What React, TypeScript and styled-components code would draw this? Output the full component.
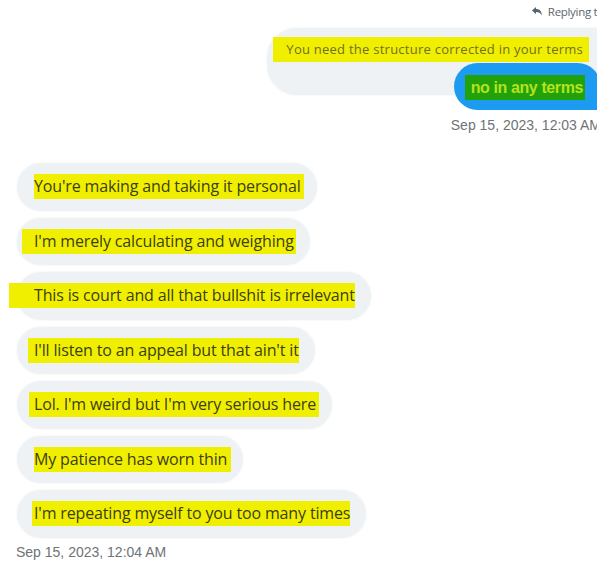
import * as React from 'react';
import styled, { createGlobalStyle } from 'styled-components';

const GlobalStyle = createGlobalStyle`
  body {
    margin: 0;
    background: #ffffff;
    overflow: hidden;
  }
`;

const Page = styled.div`
  width: 597px;
  height: 567px;
  overflow: hidden;
  display: flex;
  flex-direction: column;
  font-family: 'Open Sans', 'Noto Sans', sans-serif;
`;

const SentGroup = styled.div`
  align-self: flex-end;
  margin-right: -4px;
  display: flex;
  flex-direction: column;
  align-items: flex-end;
`;

const ReplyingTo = styled.div`
  display: flex;
  align-items: center;
  gap: 6px;
  height: 22px;
  margin-right: -3px;
  font-size: 11.5px;
  color: #5d6670;
  letter-spacing: -0.3px;
`;

const QuoteBubble = styled.div`
  display: flex;
  align-items: flex-start;
  box-sizing: border-box;
  height: 67px;
  margin-top: 6px;
  padding: 9px 18px 0 19px;
  background: #eff2f4;
  border-radius: 30px 0 0 30px;
  box-shadow: 0 0 3px #eff2f4;
`;

const SentBubble = styled.div`
  display: flex;
  align-items: center;
  box-sizing: border-box;
  height: 47px;
  margin-top: -32px;
  padding: 2px 18px 0 17px;
  background: #1d9bf0;
  border-radius: 24px 24px 4px 24px;
  position: relative;
`;

const Highlight = styled.span<{ $left?: number; $right?: number; $bg: string }>`
  display: inline-block;
  height: 25px;
  line-height: 25px;
  background: ${({ $bg }) => $bg};
  margin-left: ${({ $left = 0 }) => -$left}px;
  padding-left: ${({ $left = 0 }) => $left}px;
  margin-right: ${({ $right = 0 }) => -$right}px;
  padding-right: ${({ $right = 0 }) => $right}px;
  white-space: nowrap;
`;

const QuoteText = styled(Highlight)`
  font-size: 13px;
  letter-spacing: 0.25px;
  color: #6f7026;
`;

const SentText = styled(Highlight)`
  font-family: 'Liberation Sans', Arial, sans-serif;
  font-weight: 700;
  font-size: 16px;
  letter-spacing: -0.4px;
  color: #b6e21c;
`;

const Timestamp = styled.div<{ $align: 'left' | 'right' }>`
  font-family: 'Liberation Sans', Arial, sans-serif;
  font-size: 14px;
  color: #6e7378;
  line-height: 30px;
  white-space: nowrap;
  align-self: ${({ $align }) => ($align === 'left' ? 'flex-start' : 'flex-end')};
`;

const ReceivedGroup = styled.div`
  display: flex;
  flex-direction: column;
  align-items: flex-start;
  gap: 7px;
  margin-top: 23px;
  padding-left: 17px;
`;

const Bubble = styled.div`
  display: flex;
  align-items: center;
  box-sizing: border-box;
  height: 47.5px;
  padding: 0 16px 0 17px;
  background: #eff2f4;
  border-radius: 24px;
  box-shadow: 0 0 3px #eff2f4;
`;

const MessageText = styled(Highlight)`
  font-size: 16px;
  color: #3d3e18;
  letter-spacing: -0.15px;
`;

const BottomStamp = styled(Timestamp)`
  margin-top: -1px;
  padding-left: 16px;
`;

const ReplyIcon = () => (
  <svg width="10" height="9" viewBox="0 0 10 9" fill="#536471">
    <path d="M0 3.5 L4 0 L4 2 C7.5 2 9.5 4 10 8.5 C8.5 6 7 5 4 5 L4 7 Z" />
  </svg>
);

const received = [
  { text: "You're making and taking it personal", left: 0, right: 3 },
  { text: "I'm merely calculating and weighing", left: 12, right: 2 },
  { text: 'This is court and all that bullshit is irrelevant', left: 25, right: 0 },
  { text: "I'll listen to an appeal but that ain't it", left: 6, right: 0 },
  { text: "Lol. I'm weird but I'm very serious here", left: 5, right: 3 },
  { text: 'My patience has worn thin', left: 0, right: 4 },
  { text: "I'm repeating myself to you too many times", left: 2, right: 0 },
];

export default function App() {
  return (
    <Page>
      <GlobalStyle />
      <SentGroup>
        <ReplyingTo>
          <ReplyIcon />
          <span>Replying to</span>
        </ReplyingTo>
        <QuoteBubble>
          <QuoteText $bg="#f1ef00" $left={13} $right={6}>
            You need the structure corrected in your terms
          </QuoteText>
        </QuoteBubble>
        <SentBubble>
          <SentText $bg="#21a10a" $left={6} $right={2}>
            no in any terms
          </SentText>
        </SentBubble>
        <Timestamp $align="right">Sep 15, 2023, 12:03 AM</Timestamp>
      </SentGroup>
      <ReceivedGroup>
        {received.map((m) => (
          <Bubble key={m.text}>
            <MessageText $bg="#f1ef00" $left={m.left} $right={m.right}>
              {m.text}
            </MessageText>
          </Bubble>
        ))}
      </ReceivedGroup>
      <BottomStamp $align="left">Sep 15, 2023, 12:04 AM</BottomStamp>
    </Page>
  );
}
